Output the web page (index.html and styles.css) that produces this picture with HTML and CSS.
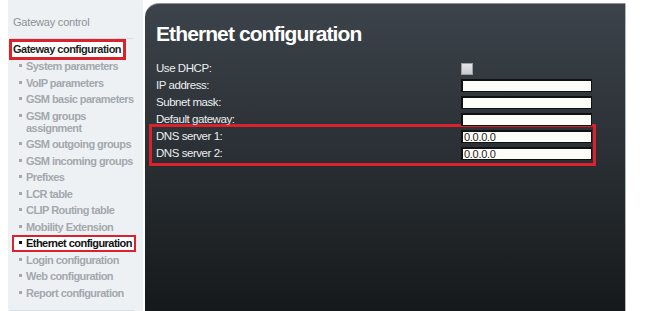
FILE: index.html
```html
<!DOCTYPE html>
<html>
<head>
<meta charset="utf-8">
<link rel="stylesheet" href="styles.css">
</head>
<body>
<div class="page">
  <aside class="sidebar">
    <div class="sb-head">Gateway control</div>
    <div class="sb-title">Gateway configuration</div>
    <ul class="menu">
      <li><span>System parameters</span></li>
      <li><span>VoIP parameters</span></li>
      <li><span>GSM basic parameters</span></li>
      <li><span>GSM groups assignment</span></li>
      <li><span>GSM outgoing groups</span></li>
      <li><span>GSM incoming groups</span></li>
      <li><span>Prefixes</span></li>
      <li><span>LCR table</span></li>
      <li><span>CLIP Routing table</span></li>
      <li><span>Mobility Extension</span></li>
      <li class="active"><span>Ethernet configuration</span></li>
      <li><span>Login configuration</span></li>
      <li><span>Web configuration</span></li>
      <li><span>Report configuration</span></li>
    </ul>
    <div class="sb-foot"></div>
  </aside>
  <main class="panel">
    <h1 class="title">Ethernet configuration</h1>
    <div class="form">
      <div class="row"><label>Use DHCP:</label><input class="check" type="checkbox" disabled></div>
      <div class="row"><label>IP address:</label><input class="field" type="text" value=""></div>
      <div class="row"><label>Subnet mask:</label><input class="field" type="text" value=""></div>
      <div class="row"><label>Default gateway:</label><input class="field" type="text" value=""></div>
      <div class="group">
        <div class="row"><label>DNS server 1:</label><input class="field" type="text" value="0.0.0.0"></div>
        <div class="row"><label>DNS server 2:</label><input class="field" type="text" value="0.0.0.0"></div>
      </div>
    </div>
  </main>
</div>
</body>
</html>
```
FILE: styles.css
```css
html, body {
  margin: 0;
  padding: 0;
  background: #ffffff;
}
body {
  font-family: "Liberation Sans", Arial, sans-serif;
}
.page {
  display: flex;
  align-items: flex-start;
  height: 311px;
  overflow: hidden;
}
.sidebar {
  flex: none;
  width: 135px;
  height: 311px;
  margin-left: 8px;
  margin-right: 2px;
  padding-top: 15px;
  box-sizing: border-box;
  background: #eef1f4;
}
.sb-head {
  margin: 0 9px 0 2px;
  padding: 0 0 9px 3px;
  font-size: 11px;
  letter-spacing: -0.2px;
  line-height: 14px;
  color: #8b9197;
  border-bottom: 1px solid #d9dee3;
}
.sb-title {
  display: inline-block;
  margin-left: 1px;
  padding: 1px 2px 1px 1px;
  border: 3px solid #d9222b;
  background: #ffffff;
  font-size: 11px;
  font-weight: bold;
  letter-spacing: -0.5px;
  line-height: 13px;
  color: #1e1f21;
}
.menu {
  list-style: none;
  margin: -2px 0 0 2px;
  padding: 0 0 0 9px;
}
.menu li {
  display: flex;
  align-items: flex-start;
  padding: 2.25px 0;
  font-size: 11px;
  font-weight: bold;
  letter-spacing: -0.55px;
  line-height: 12px;
  color: #a3a8ae;
}
.menu li span {
  max-width: 110px;
}
.menu li::before {
  content: "";
  flex: none;
  width: 3px;
  height: 3px;
  margin: 4px 4px 0 0;
  background: #a3a8ae;
}
.menu li.active {
  width: fit-content;
  margin: 0 0 0 -7px;
  padding: 0.25px 2px 0.25px 5px;
  border: 2px solid #d9222b;
  background: #ffffff;
  color: #111214;
}
.menu li.active span {
  max-width: none;
  white-space: nowrap;
}
.menu li.active::before {
  background: #111214;
}
.sb-foot {
  margin: 9px 9px 0 2px;
  border-top: 1px solid #d9dee3;
}
.panel {
  flex: none;
  width: 481px;
  height: 308px;
  margin-top: 3px;
  padding: 18px 0 0 11px;
  box-sizing: border-box;
  border-top: 1px solid #8f9397;
  border-right: 1px solid #b4b7ba;
  border-top-left-radius: 14px;
  background: linear-gradient(to bottom, #3c434a 0%, #2b3136 45%, #16191b 100%);
}
.title {
  margin: 0 0 14px 0;
  font-size: 21px;
  letter-spacing: -0.9px;
  line-height: 24px;
  font-weight: bold;
  color: #ffffff;
}
.form {
  width: 436px;
}
.row {
  display: grid;
  grid-template-columns: 305px 131px;
  align-items: center;
  height: 17px;
}
.row label {
  font-size: 11.5px;
  letter-spacing: -0.45px;
  color: #eceeef;
  line-height: 17px;
}
.field {
  box-sizing: border-box;
  width: 131px;
  height: 13px;
  margin: 0;
  padding: 0 1px;
  border: 1px solid #111;
  border-top-width: 2px;
  border-left-width: 2px;
  background: #fcfcf9;
  font-family: "Liberation Sans", Arial, sans-serif;
  font-size: 11px;
  letter-spacing: -0.3px;
  line-height: 10px;
  color: #1c1c1c;
  outline: none;
}
.check {
  appearance: none;
  -webkit-appearance: none;
  box-sizing: border-box;
  width: 12px;
  height: 12px;
  margin: 0;
  border: 1px solid #9c9fa2;
  background: linear-gradient(#e4e5e6, #c9cbcd);
}
.group {
  margin: -4px -4px 0 -7px;
  padding: 1px 1px 1px 4px;
  border: 3px solid #d9222b;
}
```
